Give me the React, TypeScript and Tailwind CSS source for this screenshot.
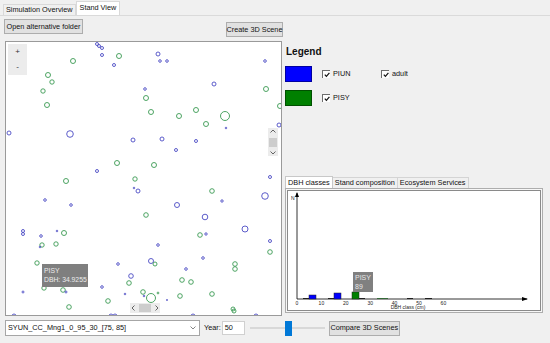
import React from 'react';

type Tree = [number, number, number, 'b' | 'g'];

// page coordinates of the stems drawn on the stand map
const trees: Tree[] = [
  [97, 44, 1.5, 'b'], [99, 46, 1.5, 'b'], [102, 48, 1.5, 'b'], [102, 55, 1.5, 'b'],
  [119, 56, 2.5, 'g'], [73, 61, 2.5, 'g'], [114, 65, 1.5, 'b'], [48, 75, 2.5, 'g'],
  [52, 82, 2.2, 'g'], [43, 91, 2.2, 'g'], [47, 105, 2.5, 'g'], [9, 133, 2, 'b'],
  [70, 134, 3.3, 'b'], [133, 140, 2, 'b'], [117, 163, 2.5, 'g'], [97, 171, 1.5, 'b'],
  [158, 54, 2, 'b'], [160, 61, 1.3, 'b'], [167, 61, 1.3, 'b'], [265, 61, 1.3, 'b'],
  [145, 89, 1.3, 'b'], [146, 98, 2.5, 'g'], [214, 84, 2, 'b'], [266, 89, 2.5, 'g'],
  [151, 112, 2.5, 'g'], [179, 116, 2.5, 'g'], [196, 110, 2.5, 'g'], [206, 124, 2.5, 'g'],
  [225, 116, 4.5, 'g'], [226, 128, 0.8, 'b'], [280, 106, 2.5, 'g'], [279, 125, 2, 'b'],
  [162, 139, 2, 'b'], [196, 141, 1.5, 'b'], [176, 150, 1.5, 'b'], [154, 165, 2.5, 'g'],
  [66, 181, 2.5, 'g'], [135, 179, 2.2, 'g'], [138, 191, 2, 'b'], [134, 188, 0.8, 'b'],
  [45, 200, 1.3, 'b'], [71, 205, 1.3, 'b'], [23, 231, 1.5, 'b'], [23, 234, 1.5, 'b'],
  [41, 236, 1.3, 'b'], [57, 231, 0.8, 'b'], [64, 233, 2.5, 'g'], [42, 245, 2.2, 'g'],
  [40, 247, 0.8, 'b'], [56, 244, 2.2, 'g'], [37, 263, 2.2, 'g'], [118, 264, 1.3, 'b'],
  [131, 276, 2.3, 'b'], [129, 283, 2.3, 'g'], [102, 287, 1.3, 'b'], [125, 294, 0.8, 'b'],
  [44, 288, 2.2, 'g'], [63, 290, 2.3, 'g'], [66, 292, 1, 'b'], [23, 292, 1, 'b'],
  [108, 301, 2.3, 'g'], [69, 307, 2.3, 'g'],
  [270, 177, 1.5, 'b'], [212, 191, 2.3, 'g'], [222, 201, 1.2, 'b'], [265, 196, 3.3, 'b'],
  [177, 205, 2.5, 'b'], [146, 215, 2.3, 'g'], [205, 217, 2.8, 'b'], [245, 229, 3, 'b'],
  [200, 235, 2.3, 'g'], [206, 234, 1.2, 'b'], [270, 241, 1.5, 'b'], [270, 252, 2.3, 'g'],
  [158, 245, 1.3, 'b'], [203, 258, 1.3, 'b'], [151, 261, 2.5, 'b'], [155, 264, 2, 'g'],
  [235, 264, 2.3, 'g'], [235, 269, 2.3, 'g'], [186, 269, 1.3, 'b'], [182, 280, 2.3, 'g'],
  [191, 282, 2.3, 'g'], [143, 292, 2.3, 'g'], [144, 296, 0.8, 'b'], [151, 298, 4.5, 'g'],
  [158, 293, 0.9, 'g'], [167, 300, 0.6, 'b'], [180, 296, 2.3, 'g'], [212, 294, 2.3, 'g'],
  [233, 309, 2, 'g'], [14, 316, 2, 'b'], [111, 316, 2, 'b'], [115, 316, 2, 'b'],
  [193, 316, 2, 'b'], [234, 311, 2, 'g'], [256, 316, 2, 'b'],
];

const bars = [
  { x: 24, w: 7, h: 4, c: '#0000ff' },
  { x: 49, w: 7, h: 6, c: '#0000ff' },
  { x: 67, w: 7, h: 7, c: '#008000' },
];

const stubs = [
  [18, 6, '#000'], [43, 6, '#000'], [74, 6, '#000'], [92, 11, '#1b5e20'], [122, 6, '#000'], [140, 7, '#000'],
] as const;

function CheckBox() {
  return (
    <span className="inline-flex h-[8px] w-[8px] items-center justify-center border-l border-t border-[#6d6d6d] bg-white">
      <svg width="6" height="6" viewBox="0 0 6 6">
        <path d="M0.8 2.6 L2.4 4.4 L5.4 0.8" fill="none" stroke="#111" strokeWidth="1.2" />
      </svg>
    </span>
  );
}

function WinButton({ children, className = '' }: { children: React.ReactNode; className?: string }) {
  return (
    <div className={`flex items-center justify-center whitespace-nowrap border border-[#adadad] bg-[#e1e1e1] text-[#111] ${className}`}>
      {children}
    </div>
  );
}

export default function App() {
  return (
    <div className="relative h-[343px] w-[550px] overflow-hidden bg-[#f0f0f0] text-[7.3px] leading-none text-[#111] [font-family:'Liberation_Sans',Arial,sans-serif]">
      {/* Tab strip */}
      <div className="flex h-[16px] items-end border-b border-[#dadada] pl-[3px]">
        <div className="flex h-[11px] items-center border border-b-0 border-[#d9d9d9] bg-[#f0f0f0] px-[2px]">
          Simulation Overview
        </div>
        <div className="flex h-[14px] items-center border border-b-0 border-[#d9d9d9] bg-white px-[3px] pb-[1px]">
          Stand View
        </div>
      </div>

      <div className="flex items-start pl-[4px]">
        {/* Stand map */}
        <div className="flex w-[278px] flex-col">
          <div className="flex h-[24px] w-[279px] items-start justify-between">
            <WinButton className="mt-[3px] h-[15px] w-[79px]">Open alternative folder</WinButton>
            <WinButton className="mt-[6px] h-[15px] w-[57px]">Create 3D Scene</WinButton>
          </div>
          <div className="relative ml-[1px] mt-[1px] h-[275px] w-[277px] border border-[#9a9a9a] bg-white">
            <svg className="absolute left-0 top-0" width="275" height="273" viewBox="6 42 275 273">
              {trees.map(([x, y, r, s], i) => (
                <circle
                  key={i}
                  cx={x}
                  cy={y}
                  r={r}
                  fill="none"
                  stroke={s === 'b' ? '#4b4bc4' : '#3a9a52'}
                  strokeWidth={0.9}
                />
              ))}
            </svg>

            <div className="absolute left-[2px] top-[2px] flex h-[31px] w-[19px] flex-col items-center justify-around bg-[#ececec] text-[8px] text-[#333]">
              <span>+</span>
              <span>-</span>
            </div>

            <div className="absolute left-[262px] top-[86px] flex h-[28px] w-[10px] flex-col items-center justify-between bg-[#ececec] py-[1px]">
              <svg width="6" height="4" viewBox="0 0 6 4"><path d="M0.5 3.5 L3 1 L5.5 3.5" fill="none" stroke="#555" strokeWidth="0.9" /></svg>
              <div className="h-[9px] w-[8px] bg-[#cdcdcd]" />
              <svg width="6" height="4" viewBox="0 0 6 4"><path d="M0.5 0.5 L3 3 L5.5 0.5" fill="none" stroke="#555" strokeWidth="0.9" /></svg>
            </div>

            <div className="absolute left-[124px] top-[261px] flex h-[10px] w-[30px] items-center justify-between bg-[#ececec] px-[1px]">
              <svg width="4" height="6" viewBox="0 0 4 6"><path d="M3.5 0.5 L1 3 L3.5 5.5" fill="none" stroke="#555" strokeWidth="0.9" /></svg>
              <div className="h-[8px] w-[12px] bg-[#cdcdcd]" />
              <svg width="4" height="6" viewBox="0 0 4 6"><path d="M0.5 0.5 L3 3 L0.5 5.5" fill="none" stroke="#555" strokeWidth="0.9" /></svg>
            </div>

            <div className="absolute left-[36px] top-[222px] flex h-[23px] w-[46px] flex-col justify-center gap-[2px] whitespace-nowrap bg-[#7f7f7f] pl-[2px] text-[6.8px] text-[#ececec]">
              <span>PISY</span>
              <span>DBH: 34.9255</span>
            </div>
          </div>
        </div>

        {/* Legend and charts */}
        <div className="ml-[3px] flex w-[260px] flex-col">
          <div className="mt-[29px] pl-[1px] text-[10px] font-bold leading-[13px]">Legend</div>
          <div className="mt-[8px] flex h-[16px] items-center">
            <div className="h-[16px] w-[27px] border border-[#0000a0] bg-[#0000ff]" />
            <div className="ml-[10px] flex w-[59px] items-center gap-[3px]">
              <CheckBox />
              <span>PIUN</span>
            </div>
            <div className="flex items-center gap-[3px]">
              <CheckBox />
              <span>adult</span>
            </div>
          </div>
          <div className="mt-[8px] flex h-[16px] items-center">
            <div className="h-[16px] w-[27px] border border-[#005000] bg-[#008000]" />
            <div className="ml-[10px] flex items-center gap-[3px]">
              <CheckBox />
              <span>PISY</span>
            </div>
          </div>

          <div className="mt-[70px] flex h-[12px] items-end">
            <div className="flex h-[12px] items-center border border-b-0 border-[#c8c8c8] bg-white px-[2px]">DBH classes</div>
            <div className="flex h-[11px] items-center border border-b-0 border-l-0 border-[#d4d4d4] px-[2px]">Stand composition</div>
            <div className="flex h-[11px] items-center border border-b-0 border-l-0 border-[#d4d4d4] px-[2px]">Ecosystem Services</div>
          </div>
          <div className="flex h-[125px] w-[258px] border border-[#adadad] bg-[#f7f7f7] p-[1px]">
            <div className="relative flex-1 border border-[#8a8a8a] bg-white">
              <svg className="absolute left-0 top-0" width="252" height="119" viewBox="288 191 252 119">
                <g transform="translate(285 188)">
                  <line x1="12" y1="5" x2="12" y2="111" stroke="#000" strokeWidth="0.8" />
                  <path d="M10 9 L12 4 L14 9 Z" fill="#000" />
                  <line x1="12" y1="111" x2="242" y2="111" stroke="#000" strokeWidth="0.8" />
                  <path d="M237 109 L243 111 L237 113 Z" fill="#000" />
                  <text x="6" y="12" fontSize="5" fill="#222">N</text>
                  {stubs.map(([x, w, c], i) => (
                    <rect key={i} x={x} y={110.2} width={w} height={0.8} fill={c} />
                  ))}
                  {bars.map((b, i) => (
                    <rect key={i} x={b.x} y={111 - b.h} width={b.w} height={b.h} fill={b.c} stroke="#222" strokeWidth="0.5" />
                  ))}
                  {[0, 10, 20, 30, 40, 50, 60].map((v, i) => (
                    <text key={v} x={12 + i * 24.4} y={116.5} fontSize="5" textAnchor="middle" fill="#222">{v}</text>
                  ))}
                  <text x={123} y={121} fontSize="5" textAnchor="middle" fill="#222">DBH class (cm)</text>
                </g>
              </svg>
              <div className="absolute left-[65px] top-[81px] flex h-[20px] w-[20px] flex-col justify-center gap-[2px] bg-[#808080] pl-[2px] text-[7px] text-[#e6e6e6]">
                <span>PISY</span>
                <span>89</span>
              </div>
            </div>
          </div>
        </div>
      </div>

      {/* Bottom controls */}
      <div className="mt-[4px] flex h-[16px] items-center pl-[5px]">
        <div className="flex h-[16px] w-[195px] items-center justify-between border border-[#a6a6a6] bg-white pl-[2px] pr-[3px]">
          <span>SYUN_CC_Mng1_0_95_30_[75, 85]</span>
          <svg width="6" height="4" viewBox="0 0 6 4"><path d="M0.5 0.5 L3 3 L5.5 0.5" fill="none" stroke="#666" strokeWidth="0.8" /></svg>
        </div>
        <span className="ml-[4px]">Year:</span>
        <div className="ml-[1px] flex h-[14px] w-[23px] items-center border border-[#d0d0d0] bg-white pl-[2px]">50</div>
        <div className="relative ml-[5px] flex h-[16px] w-[75px] items-center">
          <div className="h-[2px] w-full bg-[#d8d8d8]" />
          <div className="absolute left-[35px] top-[1px] h-[15px] w-[7px] bg-[#0078d7]" />
        </div>
        <WinButton className="ml-[4px] h-[15px] w-[71px]">Compare 3D Scenes</WinButton>
      </div>
    </div>
  );
}
